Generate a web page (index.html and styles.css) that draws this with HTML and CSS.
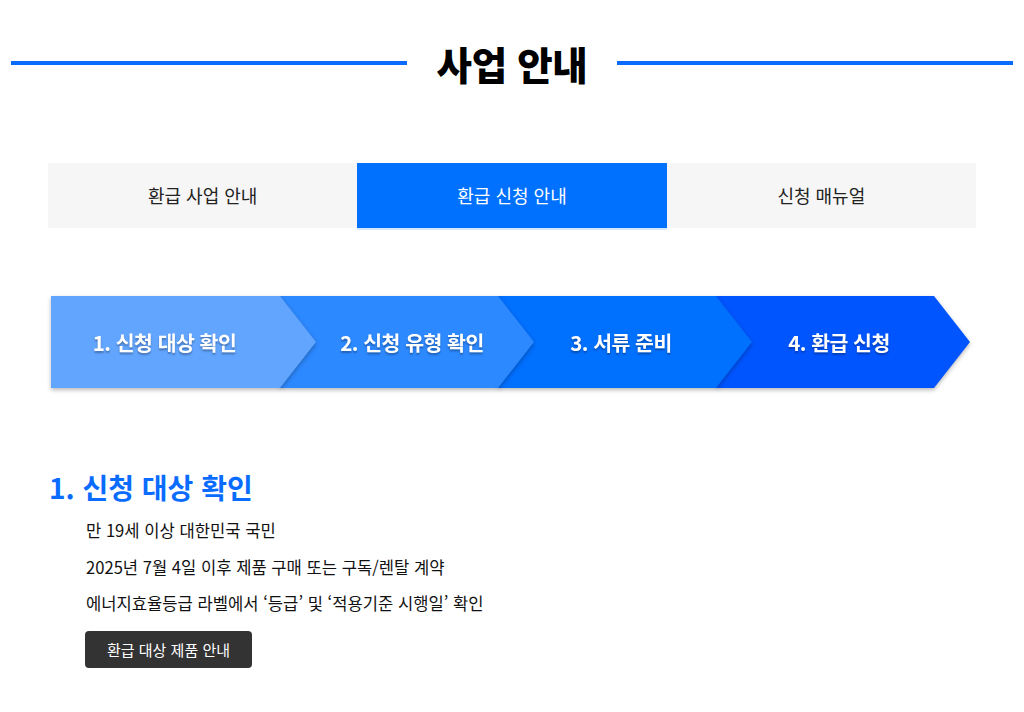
FILE: index.html
```html
<!DOCTYPE html>
<html lang="ko">
<head>
	<meta charset="utf-8">
	<title>사업 안내</title>
	<link rel="stylesheet" href="styles.css">
</head>
<body>
	<div class="page-title">
		<span class="line"></span>
		<h2>사업 안내</h2>
		<span class="line"></span>
	</div>

	<ul class="tabs">
		<li>환급 사업 안내</li>
		<li class="on">환급 신청 안내</li>
		<li>신청 매뉴얼</li>
	</ul>

	<!-- 신청 절차 -->
	<div class="steps">
		<div class="step s1"><div class="arrow">1. 신청 대상 확인</div></div>
		<div class="step s2"><div class="arrow">2. 신청 유형 확인</div></div>
		<div class="step s3"><div class="arrow">3. 서류 준비</div></div>
		<div class="step s4"><div class="arrow">4. 환급 신청</div></div>
	</div>

	<div class="section">
		<h3>1. 신청 대상 확인</h3>
		<ul class="info">
			<li>만 19세 이상 대한민국 국민</li>
			<li>2025년 7월 4일 이후 제품 구매 또는 구독/렌탈 계약</li>
			<li>에너지효율등급 라벨에서 ‘등급’ 및 ‘적용기준 시행일’ 확인</li>
		</ul>
		<a class="btn" href="#">환급 대상 제품 안내</a>
	</div>
</body>
</html>
```

FILE: styles.css
```css
body {
	margin: 0;
	background: #fff;
	font-family: "Noto Sans CJK KR", "Noto Sans", sans-serif;
	color: #111;
}

.page-title {
	display: flex;
	align-items: center;
	gap: 30px;
	padding: 38px 11px 0;
	height: 50px;
}
.page-title .line {
	flex: 1;
	height: 4px;
	background: #0a6cff;
}
.page-title h2 {
	margin: 0;
	font-size: 38.5px;
	font-weight: 900;
	color: #000;
	letter-spacing: -0.3px;
	line-height: 50px;
}

.tabs {
	display: flex;
	list-style: none;
	margin: 75px 48px 0;
	padding: 0;
	background: #f6f6f6;
}
.tabs li {
	flex: 1;
	height: 65px;
	line-height: 65px;
	text-align: center;
	font-size: 18px;
	color: #222;
}
.tabs li.on {
	background: #0070ff;
	color: #fff;
	box-shadow: 0 2px 0 #d6e7ff;
}

.steps {
	display: flex;
	margin: 68px 0 0 51px;
}
.step {
	position: relative;
	width: 254px;
	margin-left: -36px;
	filter: drop-shadow(0 2px 2px rgba(0, 0, 0, 0.28));
}
.step .arrow {
	height: 92px;
	line-height: 92px;
	padding: 0 40px 0 32px;
	text-align: center;
	color: #fff;
	font-size: 20.5px;
	font-weight: 700;
	letter-spacing: -0.5px;
	text-shadow: 0 2px 2px rgba(0, 0, 0, 0.3);
	clip-path: polygon(0 0, calc(100% - 36px) 0, 100% 50%, calc(100% - 36px) 100%, 0 100%);
}
.s1 { width: 265px; margin-left: 0; z-index: 4; }
.s1 .arrow { padding: 0 38px 0 0; background: #62a5ff; }
.s2 { z-index: 3; }
.s2 .arrow { padding: 0 32px 0 42px; background: #2d89ff; }
.s3 { z-index: 2; }
.s3 .arrow { background: #0070ff; }
.s4 { z-index: 1; }
.s4 .arrow { background: #0055ff; }

.section {
	margin: 81px 0 0 49px;
}
.section h3 {
	margin: 0;
	font-size: 28px;
	font-weight: 700;
	color: #0a6cff;
	line-height: 36px;
}
.info {
	list-style: none;
	margin: 13px 0 0 37px;
	padding: 0;
}
.info li {
	font-size: 16.6px;
	line-height: 24px;
	margin-bottom: 12.5px;
	color: #111;
}
.btn {
	display: inline-block;
	margin: 3px 0 0 36px;
	width: 167px;
	height: 37px;
	line-height: 37px;
	text-align: center;
	background: #333;
	color: #fff;
	font-size: 15px;
	text-decoration: none;
	border-radius: 4px;
}
```
